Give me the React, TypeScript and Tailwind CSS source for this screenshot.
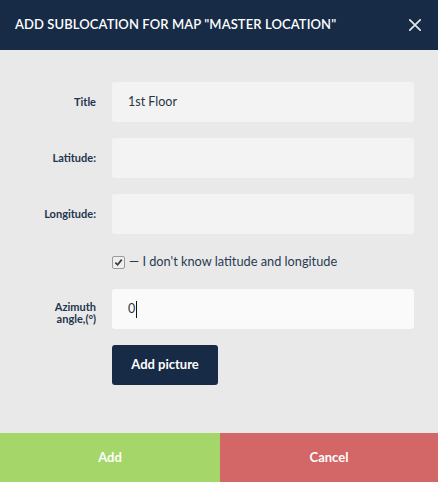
import React from "react";

const font = { fontFamily: "Lato, 'Open Sans', sans-serif" };

function Row({ label, children, twoLine }: { label: React.ReactNode; children: React.ReactNode; twoLine?: boolean }) {
  return (
    <div className={`flex ${twoLine ? "items-start" : "items-center"}`}>
      <div
        className={`w-[112px] shrink-0 pr-4 text-right text-[11px] font-bold text-[#23354d] ${twoLine ? "pt-[12px] leading-[12px]" : ""}`}
      >
        {label}
      </div>
      {children}
    </div>
  );
}

export default function App() {
  return (
    <div className="w-[438px] h-[482px] flex flex-col bg-[#e9e9e9]" style={font}>
      <div className="h-[50px] shrink-0 bg-[#172b47] flex items-center justify-between pl-[15px] pr-[17px]">
        <span className="text-white text-[13px] font-semibold tracking-[0.1px]">
          ADD SUBLOCATION FOR MAP "MASTER LOCATION"
        </span>
        <svg width="12" height="12" viewBox="0 0 12 12" className="text-[#e3e6ea]">
          <path d="M0.8 0.8L11.2 11.2M11.2 0.8L0.8 11.2" stroke="currentColor" strokeWidth="1.7" strokeLinecap="round" />
        </svg>
      </div>

      <div className="flex-1 flex flex-col pt-8 pr-6">
        <div className="flex flex-col gap-4">
          <Row label="Title">
            <div className="flex-1 h-10 rounded-[3px] bg-[#f3f3f3] flex items-center pl-4 text-[12.5px] text-[#2a3546]">
              1st Floor
            </div>
          </Row>
          <Row label="Latitude:">
            <div className="flex-1 h-10 rounded-[3px] bg-[#f3f3f3]" />
          </Row>
          <Row label="Longitude:">
            <div className="flex-1 h-10 rounded-[3px] bg-[#f3f3f3]" />
          </Row>
        </div>

        <div className="flex items-center h-6 mt-4 pl-[112px]">
          <div className="w-[13px] h-[13px] rounded-[2px] border border-[#9a9a9a] bg-[#eeeeee] flex items-center justify-center">
            <svg width="9" height="9" viewBox="0 0 10 10">
              <path d="M1.5 5.2L4 7.6L8.6 1.8" stroke="#3a3a3a" strokeWidth="1.9" fill="none" />
            </svg>
          </div>
          <span className="ml-[4px] text-[12.75px] text-[#2a3a52]">— I don't know latitude and longitude</span>
        </div>

        <div className="mt-[15px]">
          <Row
            twoLine
            label={
              <>
                Azimuth
                <br />
                angle,(°)
              </>
            }
          >
            <div className="flex-1 h-10 rounded-[3px] bg-[#fafafa] flex items-center pl-4 text-[12.5px] text-[#2a3546]">
              0<span className="inline-block w-px h-[17px] bg-[#111] ml-px" />
            </div>
          </Row>
        </div>

        <div className="pl-[112px] mt-4">
          <button className="w-[106px] h-10 rounded-[3px] bg-[#172b47] text-white text-[13px] font-bold">
            Add picture
          </button>
        </div>
      </div>

      <div className="h-[49px] shrink-0 flex">
        <button className="w-[220px] h-full bg-[#a5d66a] text-white text-[13px] font-bold">Add</button>
        <button className="flex-1 h-full bg-[#d36666] text-white text-[13px] font-bold">Cancel</button>
      </div>
    </div>
  );
}
